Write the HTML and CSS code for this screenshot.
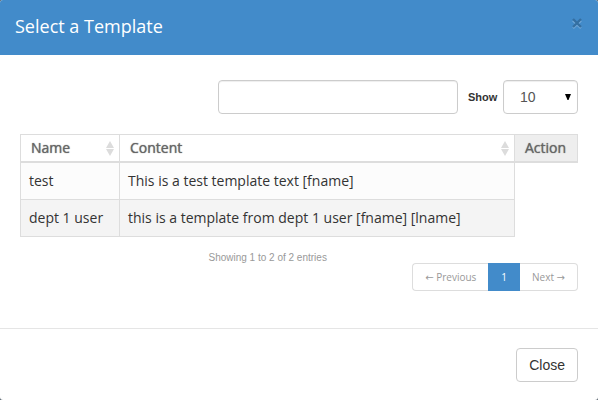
FILE: index.html
```html
<!DOCTYPE html>
<html lang="en">
<head>
<meta charset="utf-8">
<title>Select a Template</title>
<link rel="stylesheet" href="styles.css">
</head>
<body>
<div class="modal" role="dialog" aria-labelledby="modal-title">
  <header class="modal-header">
    <h1 class="modal-title" id="modal-title">Select a Template</h1>
    <button class="dismiss" type="button" aria-label="Dismiss">
      <svg width="10" height="10" viewBox="0 0 10 10"><path d="M1 1.5 9 9M9 1.5 1 9" transform="translate(0 1)" stroke="#fff" stroke-opacity=".25" stroke-width="2.4"/><path d="M1 1 9 9M9 1 1 9" stroke="#346fa2" stroke-width="2.4"/></svg>
    </button>
  </header>
  <main class="modal-body">
    <div class="toolbar">
      <input class="control search" type="search" aria-label="Search">
      <label class="show-label" for="page-size">Show</label>
      <div class="select-wrap">
        <select class="control page-size" id="page-size"><option>10</option><option>25</option><option>50</option></select>
        <svg class="caret" width="6" height="6" viewBox="0 0 6 6"><path d="M0 0H6L3.5 6h-1z" fill="#000"/></svg>
      </div>
    </div>
    <table class="templates">
      <colgroup><col class="col-name"><col><col class="col-action"></colgroup>
      <thead>
        <tr>
          <th scope="col"><div class="heading">Name <svg width="8" height="15" viewBox="0 0 8 15"><path d="M4 0 8 7H0zM0 8H8L4 15z" fill="#dcdcdc"/></svg></div></th>
          <th scope="col"><div class="heading">Content <svg width="8" height="15" viewBox="0 0 8 15"><path d="M4 0 8 7H0zM0 8H8L4 15z" fill="#dcdcdc"/></svg></div></th>
          <th class="action" scope="col"><div class="heading">Action</div></th>
        </tr>
      </thead>
      <tbody>
        <tr><td>test</td><td>This is a test template text [fname]</td></tr>
        <tr><td>dept 1 user</td><td>this is a template from dept 1 user [fname] [lname]</td></tr>
      </tbody>
    </table>
    <div class="table-footer">
      <p class="info">Showing 1 to 2 of 2 entries</p>
      <nav class="pagination" aria-label="Pages">
        <a class="page" href="#"><span class="arrow">←</span> Previous</a>
        <a class="page current" href="#" aria-current="page">1</a>
        <a class="page" href="#">Next <span class="arrow">→</span></a>
      </nav>
    </div>
  </main>
  <footer class="modal-footer">
    <button class="close" type="button">Close</button>
  </footer>
</div>
</body>
</html>
```
FILE: styles.css
```css
* {
  box-sizing: border-box;
}

body {
  margin: 0;
  background: #5b6670;
  color: #333;
  font: 14px/20px "Open Sans", "Noto Sans", sans-serif;
}

.modal {
  min-height: 100vh;
  overflow: hidden;
  border-radius: 3px;
  background: #fff;
}

.modal-header {
  display: flex;
  align-items: flex-start;
  justify-content: space-between;
  height: 55px;
  padding: 13px 16px 0 15px;
  background: #428bca;
}

.modal-title {
  margin: 0;
  color: #fff;
  font-size: 18px;
  font-weight: 400;
  line-height: 26px;
}

.dismiss {
  display: flex;
  margin-top: 5px;
  padding: 0;
  border: 0;
  background: none;
}

.dismiss svg {
  overflow: visible;
}

.modal-body {
  padding: 25px 20px 37px;
}

.toolbar {
  display: flex;
  align-items: center;
  justify-content: flex-end;
}

.control {
  height: 34px;
  border: 1px solid #ccc;
  border-radius: 4px;
  background: #fff;
  box-shadow: inset 0 1px 1px rgba(0, 0, 0, 0.07);
  color: #555;
  font: 14px/20px "Liberation Sans", sans-serif;
}

.search {
  width: 240px;
  padding: 6px 12px;
  appearance: none;
}

.show-label {
  width: 45px;
  padding-left: 10px;
  font: bold 11px/20px "Liberation Sans", sans-serif;
}

.select-wrap {
  position: relative;
}

.page-size {
  display: block;
  width: 75px;
  padding: 0 16px;
  appearance: none;
}

.caret {
  position: absolute;
  top: 14px;
  right: 7px;
  pointer-events: none;
}

.templates {
  width: 100%;
  margin-top: 20px;
  border-collapse: collapse;
  table-layout: fixed;
}

.col-name {
  width: 99px;
}

.col-action {
  width: 63px;
}

.templates th,
.templates td {
  border: 1px solid #ddd;
  text-align: left;
}

.templates th {
  padding: 3px 5px 3px 10px;
  border-bottom-width: 2px;
  color: #666;
  font-weight: 400;
  text-shadow: 0 0 1px #666;
}

.templates .action {
  background: #eee;
}

.heading {
  display: flex;
  align-items: center;
  justify-content: space-between;
}

.templates td {
  padding: 8px;
  background: #fcfcfc;
}

.templates tr:last-child td {
  background: #f4f4f4;
}

.table-footer {
  display: grid;
  grid-template-columns: 55% 1fr;
  align-items: start;
}

.info {
  justify-self: end;
  margin: 11px 0 0;
  color: #999;
  font: 10px/20px "Liberation Sans", sans-serif;
}

.pagination {
  display: flex;
  justify-self: end;
  margin-top: 26px;
}

.page {
  height: 28px;
  padding: 6px 12px;
  border: 1px solid #ddd;
  color: #999;
  font-size: 10px;
  line-height: 14px;
  text-decoration: none;
  white-space: nowrap;
}

.page:first-child {
  border-right: 0;
  border-radius: 4px 0 0 4px;
}

.page:last-child {
  border-left: 0;
  border-radius: 0 4px 4px 0;
}

.arrow {
  font-family: "DejaVu Sans", sans-serif;
}

.current {
  border-color: #428bca;
  background: #428bca;
  color: #fff;
}

.modal-footer {
  display: flex;
  justify-content: flex-end;
  padding: 19px 20px 18px;
  border-top: 1px solid #e5e5e5;
}

.close {
  padding: 6px 12px;
  border: 1px solid #ccc;
  border-radius: 4px;
  background: #fff;
  color: #333;
  font: 14px/20px "Liberation Sans", sans-serif;
}
```
